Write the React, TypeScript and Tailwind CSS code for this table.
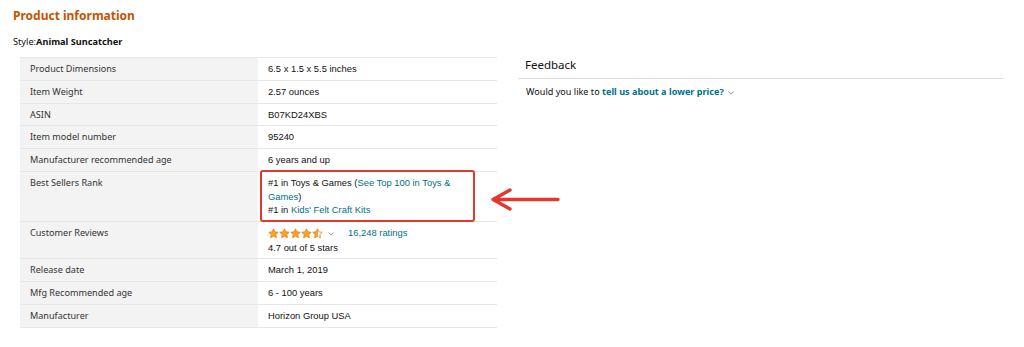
import React from "react";

const LINK = "text-[#007185]";

type Row = { label: string; value: React.ReactNode; annotate?: boolean };

function Star({ fill, id }: { fill: number; id: string }) {
  return (
    <svg width="11" height="11" viewBox="0 0 24 24" className="block">
      <defs>
        <linearGradient id={id} x1="0" x2="1" y1="0" y2="0">
          <stop offset={fill} stopColor="#ffa41c" />
          <stop offset={fill} stopColor="#ffffff" />
        </linearGradient>
      </defs>
      <path
        d="M12 1.8l3.1 6.6 7.2.9-5.3 5 1.4 7.1L12 17.9l-6.4 3.5 1.4-7.1-5.3-5 7.2-.9z"
        fill={`url(#${id})`}
        stroke="#de7921"
        strokeWidth="1.6"
        strokeLinejoin="round"
      />
    </svg>
  );
}

function Chevron({ className }: { className?: string }) {
  return (
    <svg width="6" height="4" viewBox="0 0 6 4" className={className}>
      <path d="M0.6 0.6 3 3.2 5.4 0.6" fill="none" stroke="#8a8f8f" strokeWidth="0.9" />
    </svg>
  );
}

const rows: Row[] = [
  { label: "Product Dimensions", value: "6.5 x 1.5 x 5.5 inches" },
  { label: "Item Weight", value: "2.57 ounces" },
  { label: "ASIN", value: "B07KD24XBS" },
  { label: "Item model number", value: "95240" },
  { label: "Manufacturer recommended age", value: "6 years and up" },
  {
    label: "Best Sellers Rank",
    annotate: true,
    value: (
      <>
        <div>
          #1 in Toys &amp; Games (<span className={LINK}>See Top 100 in Toys &amp;</span>
        </div>
        <div>
          <span className={LINK}>Games</span>)
        </div>
        <div>
          #1 in <span className={LINK}>Kids' Felt Craft Kits</span>
        </div>
      </>
    ),
  },
  {
    label: "Customer Reviews",
    value: (
      <>
        <div className="flex items-center h-[15px]">
          <div className="flex">
            {[1, 1, 1, 1, 0.5].map((f, i) => (
              <Star key={i} fill={f} id={`star-${i}`} />
            ))}
          </div>
          <Chevron className="ml-[5px] mt-[1px]" />
          <span className={`${LINK} ml-[14px]`}>16,248 ratings</span>
        </div>
        <div>4.7 out of 5 stars</div>
      </>
    ),
  },
  { label: "Release date", value: "March 1, 2019" },
  { label: "Mfg Recommended age", value: "6 - 100 years" },
  { label: "Manufacturer", value: "Horizon Group USA" },
];

export default function App() {
  return (
    <div className="w-[1024px] h-[347px] bg-white overflow-hidden pt-[8px] pl-[13px] font-['Noto_Sans',sans-serif] text-[#111]">
      <h2 className="text-[12px] leading-[16px] font-bold text-[#c45500]">Product information</h2>
      <div className="mt-[11px] text-[9.2px] leading-[14px] text-[#111]">
        Style:<span className="font-bold">Animal Suncatcher</span>
      </div>

      <div className="flex mt-[8px]">
        {/* specification table */}
        <div className="ml-[7px] w-[477px] border-t border-[#e7e7e7]">
          {rows.map((r) => (
            <div key={r.label} className="flex border-b border-[#e7e7e7]">
              <div className="w-[238px] shrink-0 bg-[#f3f3f3] pl-[10px] pt-[4px] pb-[4px] text-[9.1px] leading-[13.8px] text-[#333]">
                {r.label}
              </div>
              <div className="relative flex-1 pl-[10px] pr-[30px] pt-[4px] pb-[4px] text-[9.4px] leading-[13.6px] text-[#111] font-['Liberation_Sans',Arial,sans-serif] whitespace-nowrap">
                {r.value}
                {r.annotate && (
                  <>
                    <div className="absolute left-[2px] top-[-2px] w-[215px] h-[52px] border-2 border-[#e2382f] rounded-[3px]" />
                    <svg
                      className="absolute left-[232px] top-[15px]"
                      width="72"
                      height="26"
                      viewBox="0 0 72 26"
                    >
                      <path
                        d="M3 12.5H68M20 3 3 12.5 20 22"
                        fill="none"
                        stroke="#e2382f"
                        strokeWidth="3.4"
                        strokeLinecap="round"
                        strokeLinejoin="round"
                      />
                    </svg>
                  </>
                )}
              </div>
            </div>
          ))}
        </div>

        {/* feedback panel */}
        <div className="ml-[21px] w-[485px]">
          <div className="border-b border-[#dddddd] pl-[7px] pb-[5px] text-[11.5px] leading-[16px] text-[#111]">
            Feedback
          </div>
          <div className="mt-[6px] pl-[8px] flex items-center text-[9.1px] leading-[14px] text-[#111]">
            <span>Would you like to&nbsp;</span>
            <span className={`${LINK} font-bold`}>tell us about a lower price?</span>
            <Chevron className="ml-[4px] mt-[1px]" />
          </div>
        </div>
      </div>
    </div>
  );
}
